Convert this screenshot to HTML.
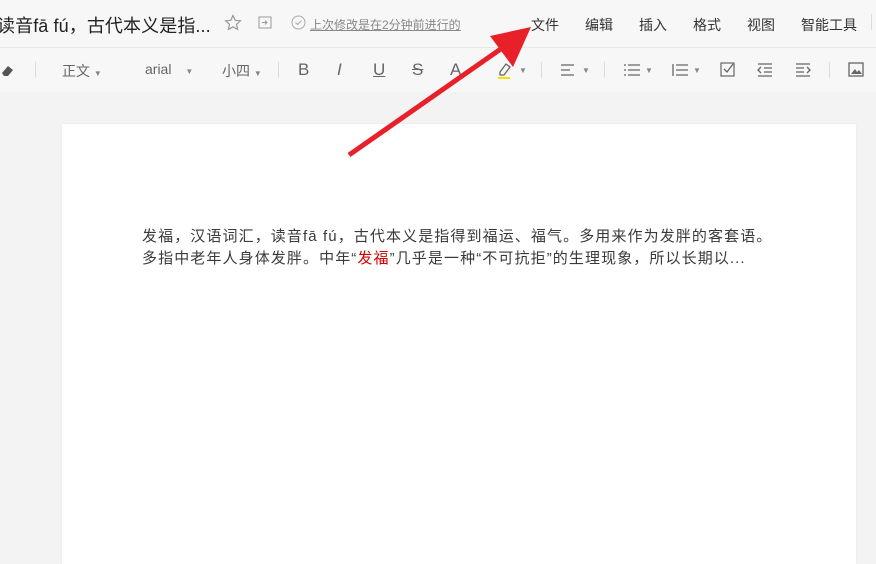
<!DOCTYPE html>
<html><head><meta charset="utf-8"><style>
body{margin:0;width:876px;height:551px;overflow:hidden;background:#f3f3f3;font-family:"Liberation Sans","Noto Sans CJK SC",sans-serif;position:relative}
.top{position:absolute;left:0;top:0;width:876px;height:47px;background:#f7f7f7;border-bottom:1px solid #e8e8e8}
.a{position:absolute;white-space:nowrap}
.title{left:-3px;top:12px;font-size:18px;color:#222;letter-spacing:0.1px}
.menu{top:15px;font-size:14px;color:#333}
.tb{position:absolute;top:48px;left:0;width:876px;height:44px;background:#f7f7f7}
.t{position:absolute;top:61px;font-size:14px;color:#666}
.sep{position:absolute;top:62px;width:1px;height:16px;background:#ddd}
.page{position:absolute;left:62px;top:124px;width:794px;height:440px;background:#fff;box-shadow:0 0 2px #e5e5e5}
.txt{position:absolute;left:142px;top:226px;font-size:15px;line-height:22px;color:#3a3a3a;letter-spacing:1.1px}
.caret{font-size:8px;color:#888}
</style></head><body>
<div class="top"></div>
<div class="a title">读音fā fú，古代本义是指...</div>
<svg class="a" style="left:224px;top:14px" width="18" height="18" viewBox="0 0 18 18"><path d="M9 1.5l2.2 4.8 5.2.5-3.9 3.5 1.1 5.1L9 12.8l-4.6 2.6 1.1-5.1-3.9-3.5 5.2-.5z" fill="none" stroke="#999" stroke-width="1.2"/></svg>
<svg class="a" style="left:258px;top:16px" width="14" height="14" viewBox="0 0 14 14"><rect x="1" y="1" width="12" height="11" fill="none" stroke="#999"/><path d="M4 6.5h5M7 4.5l2 2-2 2" fill="none" stroke="#999"/></svg>
<svg class="a" style="left:291px;top:15px" width="15" height="15" viewBox="0 0 15 15"><circle cx="7.5" cy="7.5" r="6.5" fill="none" stroke="#aaa"/><path d="M4.5 7.5l2 2 4-4" fill="none" stroke="#aaa"/></svg>
<div class="a" style="left:310px;top:16px;font-size:12px;color:#888;text-decoration:underline">上次修改是在2分钟前进行的</div>
<div class="a menu" style="left:531px">文件</div>
<div class="a menu" style="left:585px">编辑</div>
<div class="a menu" style="left:639px">插入</div>
<div class="a menu" style="left:693px">格式</div>
<div class="a menu" style="left:747px">视图</div>
<div class="a menu" style="left:801px">智能工具</div>
<div class="sep" style="left:871px;top:14px"></div>
<div class="tb"></div>
<svg class="a" style="left:0;top:62px" width="16" height="16" viewBox="0 0 16 16"><path d="M2 11l6-7 5 4-5 6H4z" fill="#555"/></svg>
<div class="sep" style="left:35px"></div>
<div class="t" style="left:62px">正文 <span class="caret">▼</span></div>
<div class="t" style="left:145px">arial <span class="caret" style="margin-left:10px">▼</span></div>
<div class="t" style="left:222px">小四 <span class="caret">▼</span></div>
<div class="sep" style="left:278px"></div>
<div class="t" style="left:298px;font-size:17px;top:60px">B</div>
<div class="t" style="left:337px;font-size:17px;top:60px;font-style:italic">I</div>
<div class="t" style="left:373px;font-size:17px;top:60px;text-decoration:underline">U</div>
<div class="t" style="left:412px;font-size:17px;top:60px;text-decoration:line-through">S</div>
<div class="t" style="left:450px;font-size:17px;top:60px">A</div>
<svg class="a" style="left:496px;top:60px" width="18" height="20" viewBox="0 0 18 20"><path d="M4 12l6-8 4 3-6 8H4z" fill="none" stroke="#666" stroke-width="1.3"/><rect x="2" y="17" width="12" height="2" fill="#f2e200"/></svg>
<div class="t caret" style="left:519px;top:66px">▼</div>
<div class="sep" style="left:541px"></div>
<svg class="a" style="left:560px;top:63px" width="16" height="14"><path d="M1 2h13M1 7h9M1 12h13" stroke="#666" stroke-width="1.3"/></svg>
<div class="t caret" style="left:582px;top:66px">▼</div>
<div class="sep" style="left:604px"></div>
<svg class="a" style="left:623px;top:63px" width="18" height="14"><path d="M5 2h12M5 7h12M5 12h12M1 2h2M1 7h2M1 12h2" stroke="#666" stroke-width="1.3"/></svg>
<div class="t caret" style="left:645px;top:66px">▼</div>
<svg class="a" style="left:671px;top:63px" width="18" height="14"><path d="M5 2h12M5 7h12M5 12h12M2 1v12" stroke="#666" stroke-width="1.3"/></svg>
<div class="t caret" style="left:693px;top:66px">▼</div>
<svg class="a" style="left:720px;top:62px" width="15" height="15"><rect x="1" y="1" width="13" height="13" fill="none" stroke="#666" stroke-width="1.2"/><path d="M4 7l3 3 6-8" fill="none" stroke="#666" stroke-width="1.3"/></svg>
<svg class="a" style="left:757px;top:63px" width="16" height="14"><path d="M1 1h14M7 5h8M7 9h8M1 13h14M4 4L1 7l3 3" fill="none" stroke="#666" stroke-width="1.3"/></svg>
<svg class="a" style="left:795px;top:63px" width="16" height="14"><path d="M1 1h14M1 5h8M1 9h8M1 13h14M12 4l3 3-3 3" fill="none" stroke="#666" stroke-width="1.3"/></svg>
<div class="sep" style="left:829px"></div>
<svg class="a" style="left:848px;top:62px" width="16" height="15"><rect x="1" y="1" width="14" height="13" fill="none" stroke="#666" stroke-width="1.3"/><path d="M3 12l4-5 2 3 2-2 3 4z" fill="#666"/></svg>
<div class="page"></div>
<div class="a txt">发福，汉语词汇，读音fā fú，古代本义是指得到福运、福气。多用来作为发胖的客套语。<br>多指中老年人身体发胖。中年“<span style="color:#d40000">发福</span>”几乎是一种“不可抗拒”的生理现象，所以长期以...</div>
<svg class="a" style="left:0;top:0" width="876" height="551"><line x1="349" y1="155" x2="505" y2="46" stroke="#e8202a" stroke-width="5"/><polygon points="531,27 490,36 513,67" fill="#e8202a"/></svg>
</body></html>
